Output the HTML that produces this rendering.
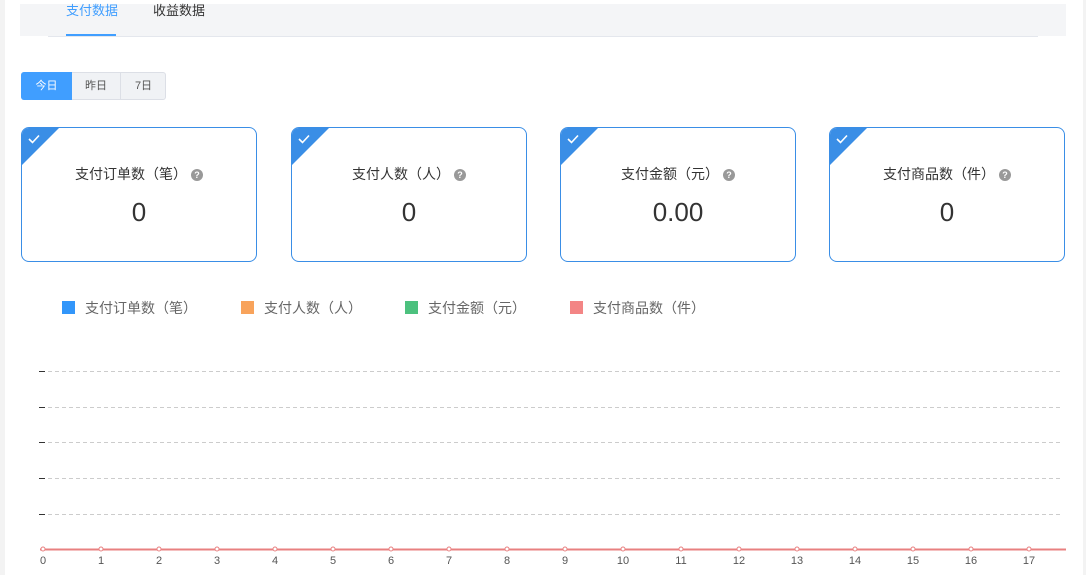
<!DOCTYPE html>
<html><head><meta charset="utf-8"><style>
*{margin:0;padding:0;box-sizing:border-box}
body{width:1086px;height:575px;background:#fff;position:relative;overflow:hidden;font-family:"Liberation Sans","Noto Sans CJK SC",sans-serif;color:#333}
.a{position:absolute}
.card{position:absolute;top:127px;width:236px;height:135px;border:1px solid #3a8ee6;border-radius:8px;overflow:hidden;text-align:center}
.card .tri{position:absolute;left:0;top:0;width:0;height:0;border-top:37px solid #3a8ee6;border-right:37px solid transparent}
.card svg{position:absolute;left:6px;top:6px}
.card .t{position:absolute;top:36px;left:0;right:0;font-size:14px;color:#333}
.q{display:inline-block;width:12px;height:12px;border-radius:50%;background:#999;color:#fff;font-size:9px;line-height:12px;vertical-align:1px;margin-left:4px;font-weight:bold}
.card .v{position:absolute;top:69px;left:0;right:0;font-size:26px;color:#333}
.lg{position:absolute;top:298px;font-size:14px;color:#666}
.lg i{display:inline-block;width:13px;height:13px;vertical-align:-1px;margin-right:10px}
.xl{position:absolute;top:555px;font-size:11px;color:#555;width:20px;margin-left:-10px;text-align:center}
</style></head><body>
<div class="a" style="left:0;top:0;width:5px;height:575px;background:#f3f3f3"></div>
<div class="a" style="left:1083px;top:0;width:3px;height:575px;background:#f3f3f3"></div>
<div class="a" style="left:20px;top:4px;width:1046px;height:32px;background:#f4f5f7"></div>
<div class="a" style="left:48px;top:36px;width:990px;height:1px;background:#e4e7ed"></div>
<div class="a" style="left:66px;top:0px;font-size:13px;color:#409eff">支付数据</div>
<div class="a" style="left:66px;top:34px;width:50px;height:2px;background:#409eff"></div>
<div class="a" style="left:153px;top:0px;font-size:13px;color:#333">收益数据</div>
<div class="a" style="left:21px;top:72px;width:145px;height:28px;border:1px solid #dcdfe6;border-radius:3px;background:#f0f2f5;font-size:11px;color:#555">
<div class="a" style="left:-1px;top:-1px;width:51px;height:28px;background:#409eff;color:#fff;text-align:center;line-height:28px;border-radius:3px 0 0 3px">今日</div>
<div class="a" style="left:50px;top:0;width:49px;height:26px;border-right:1px solid #dcdfe6;text-align:center;line-height:26px">昨日</div>
<div class="a" style="left:99px;top:0;width:45px;height:26px;text-align:center;line-height:26px">7日</div>
</div>
<div class="card" style="left:21px"><div class="tri"></div><svg width="12" height="10"><path d="M1 5 L4.5 8.5 L11 1.5" stroke="#fff" stroke-width="1.6" fill="none"/></svg><div class="t">支付订单数（笔）<span class="q">?</span></div><div class="v">0</div></div>
<div class="card" style="left:291px"><div class="tri"></div><svg width="12" height="10"><path d="M1 5 L4.5 8.5 L11 1.5" stroke="#fff" stroke-width="1.6" fill="none"/></svg><div class="t">支付人数（人）<span class="q">?</span></div><div class="v">0</div></div>
<div class="card" style="left:560px"><div class="tri"></div><svg width="12" height="10"><path d="M1 5 L4.5 8.5 L11 1.5" stroke="#fff" stroke-width="1.6" fill="none"/></svg><div class="t">支付金额（元）<span class="q">?</span></div><div class="v">0.00</div></div>
<div class="card" style="left:829px"><div class="tri"></div><svg width="12" height="10"><path d="M1 5 L4.5 8.5 L11 1.5" stroke="#fff" stroke-width="1.6" fill="none"/></svg><div class="t">支付商品数（件）<span class="q">?</span></div><div class="v">0</div></div>
<div class="lg" style="left:62px"><i style="background:#3296fa"></i>支付订单数（笔）</div>
<div class="lg" style="left:241px"><i style="background:#f8a35b"></i>支付人数（人）</div>
<div class="lg" style="left:405px"><i style="background:#4cc17e"></i>支付金额（元）</div>
<div class="lg" style="left:570px"><i style="background:#f38585"></i>支付商品数（件）</div>
<svg class="a" style="left:0;top:0" width="1086" height="575">
<g stroke="#ccc" stroke-dasharray="4,3">
<line x1="48" y1="371.5" x2="1062" y2="371.5"/><line x1="48" y1="407.5" x2="1062" y2="407.5"/><line x1="48" y1="442.5" x2="1062" y2="442.5"/><line x1="48" y1="478.5" x2="1062" y2="478.5"/><line x1="48" y1="514.5" x2="1062" y2="514.5"/>
</g>
<g stroke="#333"><line x1="39" y1="371.5" x2="45" y2="371.5"/><line x1="39" y1="407.5" x2="45" y2="407.5"/><line x1="39" y1="442.5" x2="45" y2="442.5"/><line x1="39" y1="478.5" x2="45" y2="478.5"/><line x1="39" y1="514.5" x2="45" y2="514.5"/></g>
<line x1="40" y1="549.5" x2="1066" y2="549.5" stroke="#e88080" stroke-width="2"/>
<g fill="#fff" stroke="#e88080" stroke-width="1">
<circle cx="43" cy="549" r="2"/><circle cx="101" cy="549" r="2"/><circle cx="159" cy="549" r="2"/><circle cx="217" cy="549" r="2"/><circle cx="275" cy="549" r="2"/><circle cx="333" cy="549" r="2"/><circle cx="391" cy="549" r="2"/><circle cx="449" cy="549" r="2"/><circle cx="507" cy="549" r="2"/><circle cx="565" cy="549" r="2"/><circle cx="623" cy="549" r="2"/><circle cx="681" cy="549" r="2"/><circle cx="739" cy="549" r="2"/><circle cx="797" cy="549" r="2"/><circle cx="855" cy="549" r="2"/><circle cx="913" cy="549" r="2"/><circle cx="971" cy="549" r="2"/><circle cx="1029" cy="549" r="2"/>
</g>
</svg>
<div class="xl" style="left:43px">0</div><div class="xl" style="left:101px">1</div><div class="xl" style="left:159px">2</div><div class="xl" style="left:217px">3</div><div class="xl" style="left:275px">4</div><div class="xl" style="left:333px">5</div><div class="xl" style="left:391px">6</div><div class="xl" style="left:449px">7</div><div class="xl" style="left:507px">8</div><div class="xl" style="left:565px">9</div><div class="xl" style="left:623px">10</div><div class="xl" style="left:681px">11</div><div class="xl" style="left:739px">12</div><div class="xl" style="left:797px">13</div><div class="xl" style="left:855px">14</div><div class="xl" style="left:913px">15</div><div class="xl" style="left:971px">16</div><div class="xl" style="left:1029px">17</div>
</body></html>
